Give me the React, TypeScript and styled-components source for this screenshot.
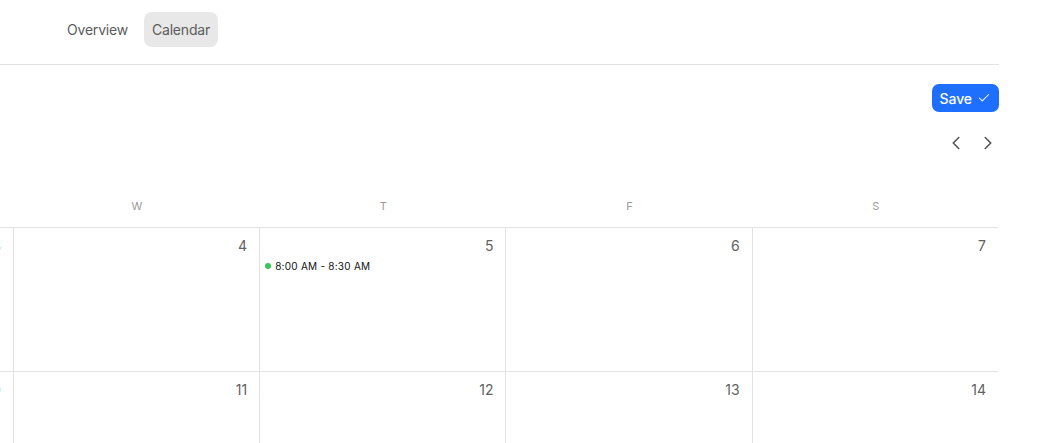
import React from "react";
import styled, { createGlobalStyle } from "styled-components";
import { Check, ChevronLeft, ChevronRight } from "lucide-react";

const GlobalStyle = createGlobalStyle`
  html, body { margin: 0; padding: 0; background: #ffffff; }
  body { font-family: Inter, "Noto Sans", "Liberation Sans", sans-serif; color: #222; }
  * { box-sizing: border-box; }
`;

const Page = styled.div`
  width: 999px;
  overflow: hidden;
`;

const Header = styled.header`
  height: 65px;
  display: flex;
  align-items: flex-start;
  gap: 8px;
  padding: 12px 0 0 59px;
  border-bottom: 1px solid #e2e2e2;
`;

const Tab = styled.button<{ $active?: boolean }>`
  height: 35px;
  padding: 0 8px;
  border: none;
  border-radius: 8px;
  background: ${(p) => (p.$active ? "#e8e8e8" : "transparent")};
  color: #5c5c5c;
  font-family: inherit;
  font-size: 14px;
  letter-spacing: -0.2px;
  line-height: 35px;
  cursor: pointer;
`;

const Toolbar = styled.div`
  display: flex;
  flex-direction: column;
  align-items: flex-end;
  padding-top: 19px;
  gap: 19px;
`;

const SaveButton = styled.button`
  height: 28px;
  display: flex;
  align-items: center;
  gap: 5px;
  padding: 0 8px 0 8px;
  border: none;
  border-radius: 7px;
  background: #1f6fff;
  color: #ffffff;
  font-family: inherit;
  font-size: 14px;
  font-weight: 500;
  letter-spacing: -0.1px;
  cursor: pointer;
`;

const NavGroup = styled.div`
  display: flex;
  gap: 8px;
  margin-right: -1px;
`;

const NavButton = styled.button`
  width: 24px;
  height: 24px;
  padding: 0;
  display: flex;
  align-items: center;
  justify-content: center;
  border: none;
  background: transparent;
  color: #555555;
  cursor: pointer;
`;

const Calendar = styled.div`
  width: 1724px;
  margin-left: -726px;
`;

const WeekdayRow = styled.div`
  display: grid;
  grid-template-columns: repeat(7, 1fr);
  padding: 43px 0 13px;
`;

const Weekday = styled.div`
  text-align: center;
  font-size: 11px;
  line-height: 16px;
  color: #9a9a9a;
  padding-left: 2px;
`;

const DayGrid = styled.div`
  display: grid;
  grid-template-columns: repeat(7, 1fr);
`;

const DayCell = styled.div<{ $first?: boolean }>`
  height: 144px;
  border-top: 1px solid #e2e2e2;
  border-left: ${(p) => (p.$first ? "none" : "1px solid #e2e2e2")};
  padding: 8px 12px 0 5px;
  display: flex;
  flex-direction: column;
`;

const DayNumber = styled.div`
  text-align: right;
  font-size: 14px;
  line-height: 20px;
  color: #616161;
`;

const Event = styled.div`
  margin-top: 3px;
  display: flex;
  align-items: center;
  gap: 4px;
  font-size: 10px;
  letter-spacing: 0.25px;
  line-height: 14px;
  color: #111111;
`;

const Dot = styled.span<{ $color: string }>`
  width: 6px;
  height: 6px;
  border-radius: 50%;
  background: ${(p) => p.$color};
  flex: none;
`;

const weekdays = ["S", "M", "T", "W", "T", "F", "S"];
const days = [1, 2, 3, 4, 5, 6, 7, 8, 9, 10, 11, 12, 13, 14];
const events: Record<number, { label: string; color: string }[]> = {
  5: [{ label: "8:00 AM - 8:30 AM", color: "#34c759" }],
};

export default function App() {
  return (
    <>
      <GlobalStyle />
      <Page>
        <Header>
          <Tab>Overview</Tab>
          <Tab $active>Calendar</Tab>
        </Header>
        <Toolbar>
          <SaveButton>
            Save
            <Check size={14} strokeWidth={1.75} />
          </SaveButton>
          <NavGroup>
            <NavButton aria-label="Previous">
              <ChevronLeft size={22} strokeWidth={1.75} />
            </NavButton>
            <NavButton aria-label="Next">
              <ChevronRight size={22} strokeWidth={1.75} />
            </NavButton>
          </NavGroup>
        </Toolbar>
        <Calendar>
          <WeekdayRow>
            {weekdays.map((d, i) => (
              <Weekday key={i}>{d}</Weekday>
            ))}
          </WeekdayRow>
          <DayGrid>
            {days.map((d, i) => (
              <DayCell key={d} $first={i % 7 === 0}>
                <DayNumber>{d}</DayNumber>
                {(events[d] || []).map((e) => (
                  <Event key={e.label}>
                    <Dot $color={e.color} />
                    {e.label}
                  </Event>
                ))}
              </DayCell>
            ))}
          </DayGrid>
        </Calendar>
      </Page>
    </>
  );
}
